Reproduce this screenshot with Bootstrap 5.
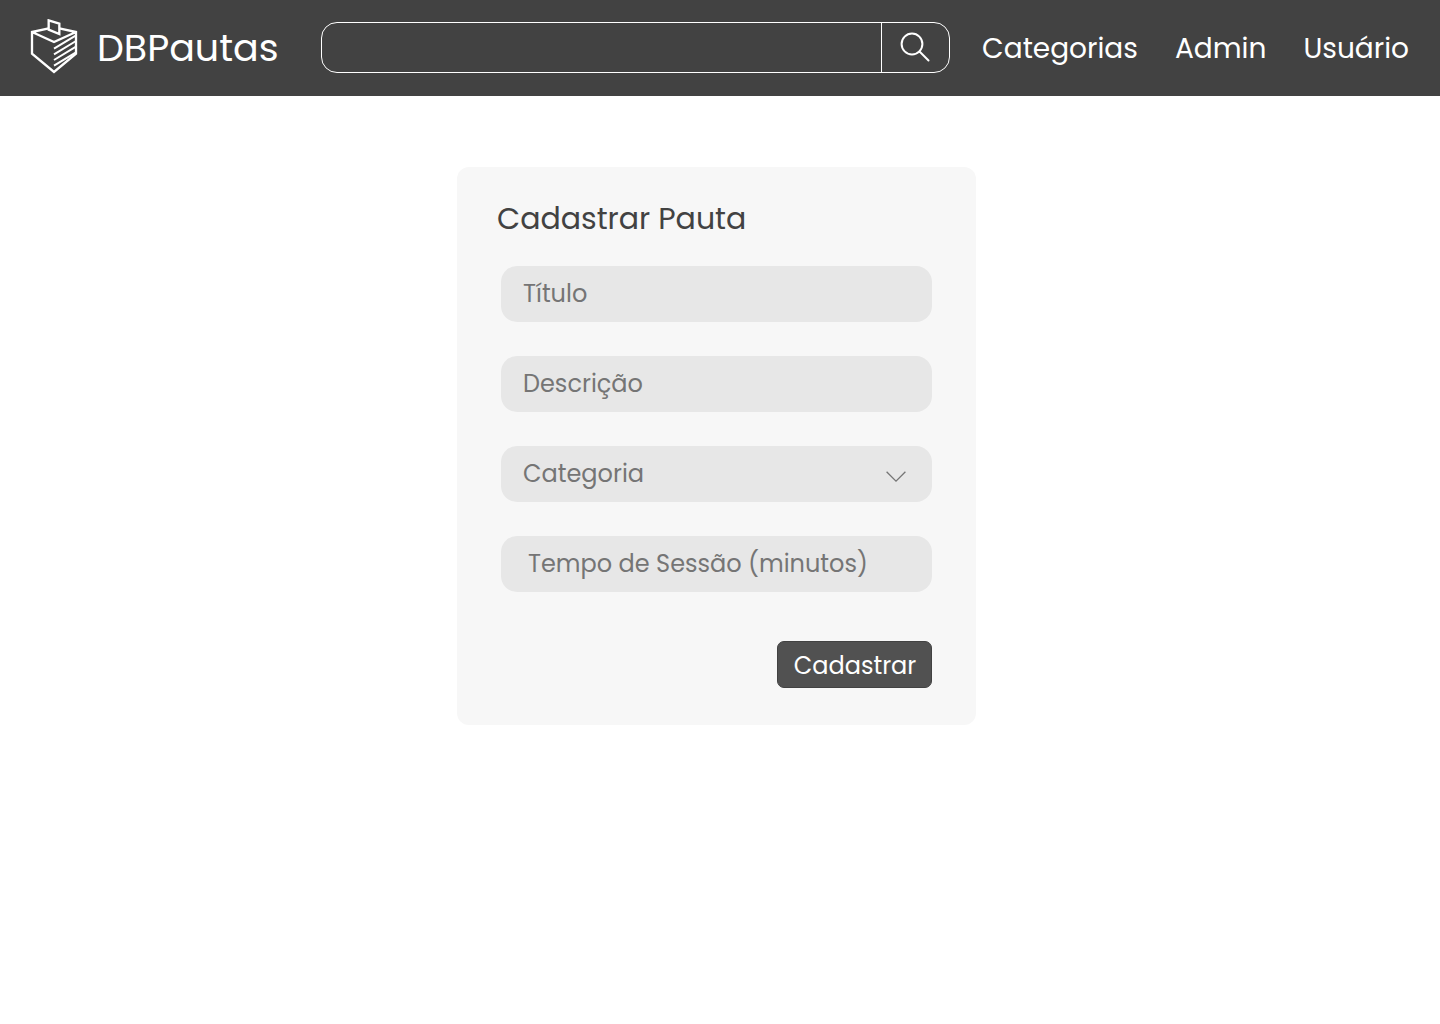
<!DOCTYPE html>
<html lang="pt-BR">
<head>
<meta charset="utf-8">
<meta name="viewport" content="width=device-width, initial-scale=1">
<title>DBPautas - Cadastrar Pauta</title>
<link href="https://cdn.jsdelivr.net/npm/bootstrap@5.3.0/dist/css/bootstrap.min.css" rel="stylesheet">
<style>
  body { font-family: Poppins, Inter, "Open Sans", sans-serif; background: #fff; color: #424242; }
  .topbar { background: #424242; min-height: 96px; padding: 0 31px 2px 30px; }
  .brand-name { font-size: 38px; line-height: 50px; font-weight: 400; margin-left: 19px; padding-top: 2px; }
  .search-box { height: 51px; border: 1px solid #fff; border-radius: 16px; max-width: 629px; margin: 0 32px 0 42px; }
  .search-box .form-control { color: #fff; font-size: 24px; border-radius: 16px 0 0 16px; }
  .search-box button { width: 68px; border-left: 1px solid #fff; border-radius: 0 16px 16px 0; }
  .main-links { gap: 37px; font-size: 28px; line-height: 40px; padding-top: 4px; }
  .page-body { padding: 71px 7px 48px 0; }
  .form-panel { width: 100%; max-width: 519px; background: #f7f7f7; border-radius: 12px; padding: 31px 44px 37px; }
  .form-panel h1 { font-size: 30px; line-height: 42px; font-weight: 400; margin: 0 0 26px -4px; }
  .field-stack { gap: 34px; }
  .field-stack .form-control, .field-stack .form-select {
    height: 56px; border-radius: 16px; background-color: #e7e7e7; color: #757575;
    font-size: 24px; line-height: 36px; padding: 8px 22px;
  }
  .field-stack .form-control { padding-bottom: 10px; }
  .field-stack .form-control::placeholder { color: #757575; opacity: 1; }
  .field-stack .form-select { background-image: none; }
  .field-stack .form-control[inputmode="numeric"] { padding-left: 27px; }
  .chevron { top: 25px; right: 26px; }
  .btn-save { height: 47px; width: 155px; margin-top: 49px; padding: 2px 0 0 1px; background: #515151; border: 1px solid #424242; border-radius: 7px; font-size: 24px; line-height: 36px; }
</style>
<script src="https://cdn.jsdelivr.net/npm/bootstrap@5.3.0/dist/js/bootstrap.bundle.min.js"></script>
</head>
<body>
<header class="topbar d-flex flex-wrap flex-lg-nowrap align-items-center">
  <a href="#" class="d-flex align-items-center text-white text-decoration-none flex-shrink-0">
    <svg width="48" height="56" viewBox="30 26 144 168" fill="none" stroke="#fff" stroke-width="7" aria-hidden="true">
      <path d="M86 54L36 65V130L102 185L168 130V65L118 54M36 65L102 95L168 65"/>
      <path d="M86 30L118 40V71L86 58Z"/>
      <path stroke-width="6" d="M102 115L168 75M102 132L168 92M102 149L168 109M102 166L168 126"/>
    </svg>
    <span class="brand-name">DBPautas</span>
  </a>
  <form class="search-box d-flex flex-grow-1" role="search">
    <input type="search" class="form-control bg-transparent border-0 shadow-none" aria-label="Pesquisar">
    <button type="button" class="btn p-0 border-top-0 border-end-0 border-bottom-0 flex-shrink-0 d-flex align-items-center justify-content-center" aria-label="Buscar">
      <svg width="30" height="30" viewBox="0 0 30 30" fill="none" stroke="#fff" stroke-width="2" stroke-linecap="round"><circle cx="12" cy="12" r="10.4"/><path d="M19.5 19.5L28.5 28.5"/></svg>
    </button>
  </form>
  <nav class="main-links d-flex ms-auto flex-shrink-0">
    <a href="#" class="text-white text-decoration-none">Categorias</a>
    <a href="#" class="text-white text-decoration-none">Admin</a>
    <a href="#" class="text-white text-decoration-none">Usuário</a>
  </nav>
</header>
<main class="page-body d-flex justify-content-center">
  <form class="form-panel">
    <h1>Cadastrar Pauta</h1>
    <div class="field-stack d-flex flex-column">
      <input type="text" class="form-control border-0" placeholder="Título" aria-label="Título">
      <input type="text" class="form-control border-0" placeholder="Descrição" aria-label="Descrição">
      <div class="position-relative">
        <select class="form-select border-0" aria-label="Categoria"><option>Categoria</option></select>
        <svg class="chevron position-absolute pe-none" width="20" height="12" viewBox="0 0 20 12" fill="none" stroke="#757575" stroke-width="1.3" aria-hidden="true"><path d="M.6 .8L10 10.2L19.4 .8"/></svg>
      </div>
      <input type="text" inputmode="numeric" class="form-control border-0" placeholder="Tempo de Sessão (minutos)" aria-label="Tempo de Sessão (minutos)">
    </div>
    <div class="d-flex justify-content-end">
      <button type="button" class="btn btn-save text-white">Cadastrar</button>
    </div>
  </form>
</main>
</body>
</html>
